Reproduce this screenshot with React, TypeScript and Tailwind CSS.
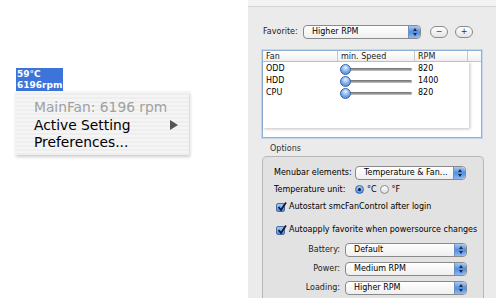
import React from "react";

const font = { fontFamily: '"DejaVu Sans", "Noto Sans", sans-serif' };

function Stepper() {
  return (
    <div className="w-[12px] h-full rounded-r-[4px] bg-gradient-to-b from-[#a9c8f0] via-[#4f8fe0] to-[#8fb8ee] border-l border-[#6d8fc4] flex flex-col items-center justify-center gap-[2px]">
      <div className="w-0 h-0 border-l-[2px] border-r-[2px] border-b-[3px] border-l-transparent border-r-transparent border-b-[#1a2a4a]" />
      <div className="w-0 h-0 border-l-[2px] border-r-[2px] border-t-[3px] border-l-transparent border-r-transparent border-t-[#1a2a4a]" />
    </div>
  );
}

function Popup({ text, w }: { text: string; w: string }) {
  return (
    <div className={`${w} shrink-0 h-[14px] flex rounded-[4px] border border-[#8a8a8a] bg-gradient-to-b from-white to-[#efefef] overflow-hidden`}>
      <div className="flex-1 pl-[8px] text-[8px] leading-[12px] text-black">{text}</div>
      <Stepper />
    </div>
  );
}

function Slider() {
  return (
    <div className="relative w-[72px] h-[11px] flex items-center">
      <div className="w-full h-[3px] rounded-full bg-gradient-to-b from-[#6a6a6a] to-[#c8c8c8]" />
      <div className="absolute left-0 top-[0px] w-[11px] h-[11px] rounded-full border border-[#3a64a8] bg-[radial-gradient(circle_at_50%_30%,#e8f2ff_0%,#8ab8f0_45%,#3b78d8_100%)]" />
    </div>
  );
}

function Check({ label }: { label: string }) {
  return (
    <div className="flex items-center gap-[4px] pl-[13px]">
      <div className="relative w-[9px] h-[9px] rounded-[2px] border border-[#4a6ea8] bg-gradient-to-b from-[#a8c8f0] to-[#4f8fe0]">
        <svg viewBox="0 0 10 10" className="absolute -top-[2px] left-0 w-[10px] h-[10px]">
          <path d="M1.5 5 L4 8 L9 0.5" stroke="#0d1a33" strokeWidth="1.8" fill="none" />
        </svg>
      </div>
      <span className="text-[8px] text-black">{label}</span>
    </div>
  );
}

export default function App() {
  const rows = [
    ["ODD", "820"],
    ["HDD", "1400"],
    ["CPU", "820"],
  ];
  return (
    <div className="w-[500px] h-[304px] bg-white flex overflow-hidden" style={font}>
      {/* Left: menubar + menu */}
      <div className="w-[248px] pt-[68px] pl-[16px] flex flex-col">
        <div className="w-[47px] h-[23px] bg-[#3d74d9] text-white text-[9px] font-semibold leading-[11px] pl-[1px] pt-[1px]">
          <div>59°C</div>
          <div>6196rpm</div>
        </div>
        <div className="-ml-[1px] w-[174px] h-[64px] bg-[repeating-linear-gradient(to_bottom,#f5f5f5_0px,#f5f5f5_2px,#eeeeee_2px,#eeeeee_4px)] shadow-[1px_2px_3px_rgba(0,0,0,0.2)] pt-[8px] pl-[19px] text-[13.8px] leading-[17.5px]">
          <div className="text-[#a0a0a0]">MainFan: 6196 rpm</div>
          <div className="flex items-center text-black">
            <span className="flex-1">Active Setting</span>
            <div className="mr-[11px] w-0 h-0 border-t-[5px] border-b-[5px] border-l-[8px] border-t-transparent border-b-transparent border-l-[#555]" />
          </div>
          <div className="text-black">Preferences...</div>
        </div>
      </div>

      {/* Right: preferences panel */}
      <div className="w-[248px] h-[298px] bg-[#ebebeb] flex flex-col">
        <div className="h-[7px] bg-[#f3f3f3] border-b border-[#d6d6d6]" />
        <div className="pl-[15px] mt-[17px] flex items-center h-[16px]">
          <span className="text-[8px] text-[#222] w-[40px] shrink-0">Favorite:</span>
          <Popup text="Higher RPM" w="w-[118px]" />
          <div className="ml-[9px] w-[18px] h-[12px] rounded-full border border-[#8a8a8a] bg-gradient-to-b from-white to-[#e4e4e4] text-[8px] leading-[10px] text-center text-[#333]">−</div>
          <div className="ml-[7px] w-[18px] h-[12px] rounded-full border border-[#8a8a8a] bg-gradient-to-b from-white to-[#e4e4e4] text-[8px] leading-[10px] text-center text-[#333]">+</div>
        </div>

        {/* Table */}
        <div className="ml-[14px] mt-[10px] w-[220px] h-[88px] border border-[#8fb0d8] shadow-[0_0_0_1px_#c4d6ee] bg-white flex flex-col">
          <div className="h-[11px] flex border-b border-[#c8c8c8] bg-gradient-to-b from-white to-[#f0f0f0] text-[8px] leading-[11px] text-[#222]">
            <div className="w-[75px] pl-[3px] border-r border-[#c8c8c8]">Fan</div>
            <div className="w-[77px] pl-[3px] border-r border-[#c8c8c8]">min. Speed</div>
            <div className="w-[53px] pl-[3px] border-r border-[#c8c8c8]">RPM</div>
            <div className="flex-1" />
          </div>
          <div className="flex-1 flex">
            <div className="w-[206px] h-[66px] shadow-[1px_1px_3px_rgba(0,0,0,0.25)] pt-[1px]">
              {rows.map(([n, r]) => (
                <div key={n} className="h-[12px] flex items-center text-[8px] text-black">
                  <div className="w-[75px] pl-[3px]">{n}</div>
                  <div className="w-[77px] pl-[2px]"><Slider /></div>
                  <div className="pl-[3px]">{r}</div>
                </div>
              ))}
            </div>
          </div>
        </div>

        <div className="pl-[22px] mt-[5px] text-[8px] text-[#333] h-[11px] leading-[11px]">Options</div>

        {/* Options box */}
        <div className="ml-[14px] mt-[2px] w-[222px] flex-1 rounded-t-[5px] border border-b-0 border-[#b8b8b8] bg-[#e2e2e2] flex flex-col pt-[9px]">
          <div className="flex items-center pl-[11px] h-[14px]">
            <span className="text-[8px] text-black w-[81px]">Menubar elements:</span>
            <Popup text="Temperature & Fan..." w="w-[111px]" />
          </div>
          <div className="flex items-center pl-[11px] mt-[3px] h-[13px]">
            <span className="text-[8px] text-black w-[81px]">Temperature unit:</span>
            <div className="w-[9px] h-[9px] rounded-full border border-[#3a64a8] bg-gradient-to-b from-[#a8c8f0] to-[#4f8fe0] flex items-center justify-center">
              <div className="w-[3px] h-[3px] rounded-full bg-[#0d1a33]" />
            </div>
            <span className="text-[8px] text-black ml-[3px]">°C</span>
            <div className="ml-[3px] w-[9px] h-[9px] rounded-full border border-[#8a8a8a] bg-gradient-to-b from-white to-[#e0e0e0]" />
            <span className="text-[8px] text-black ml-[3px]">°F</span>
          </div>
          <div className="mt-[5px]"><Check label="Autostart smcFanControl after login" /></div>
          <div className="mt-[11px]"><Check label="Autoapply favorite when powersource changes" /></div>
          {[
            ["Battery:", "Default", "mt-[7px]"],
            ["Power:", "Medium RPM", "mt-[5px]"],
            ["Loading:", "Higher RPM", "mt-[5px]"],
          ].map(([l, v, m]) => (
            <div key={l} className={`flex items-center ${m} h-[14px]`}>
              <span className="w-[82px] text-right text-[8px] text-[#222] pr-[5px]">{l}</span>
              <Popup text={v} w="w-[122px]" />
            </div>
          ))}
        </div>
      </div>
    </div>
  );
}
